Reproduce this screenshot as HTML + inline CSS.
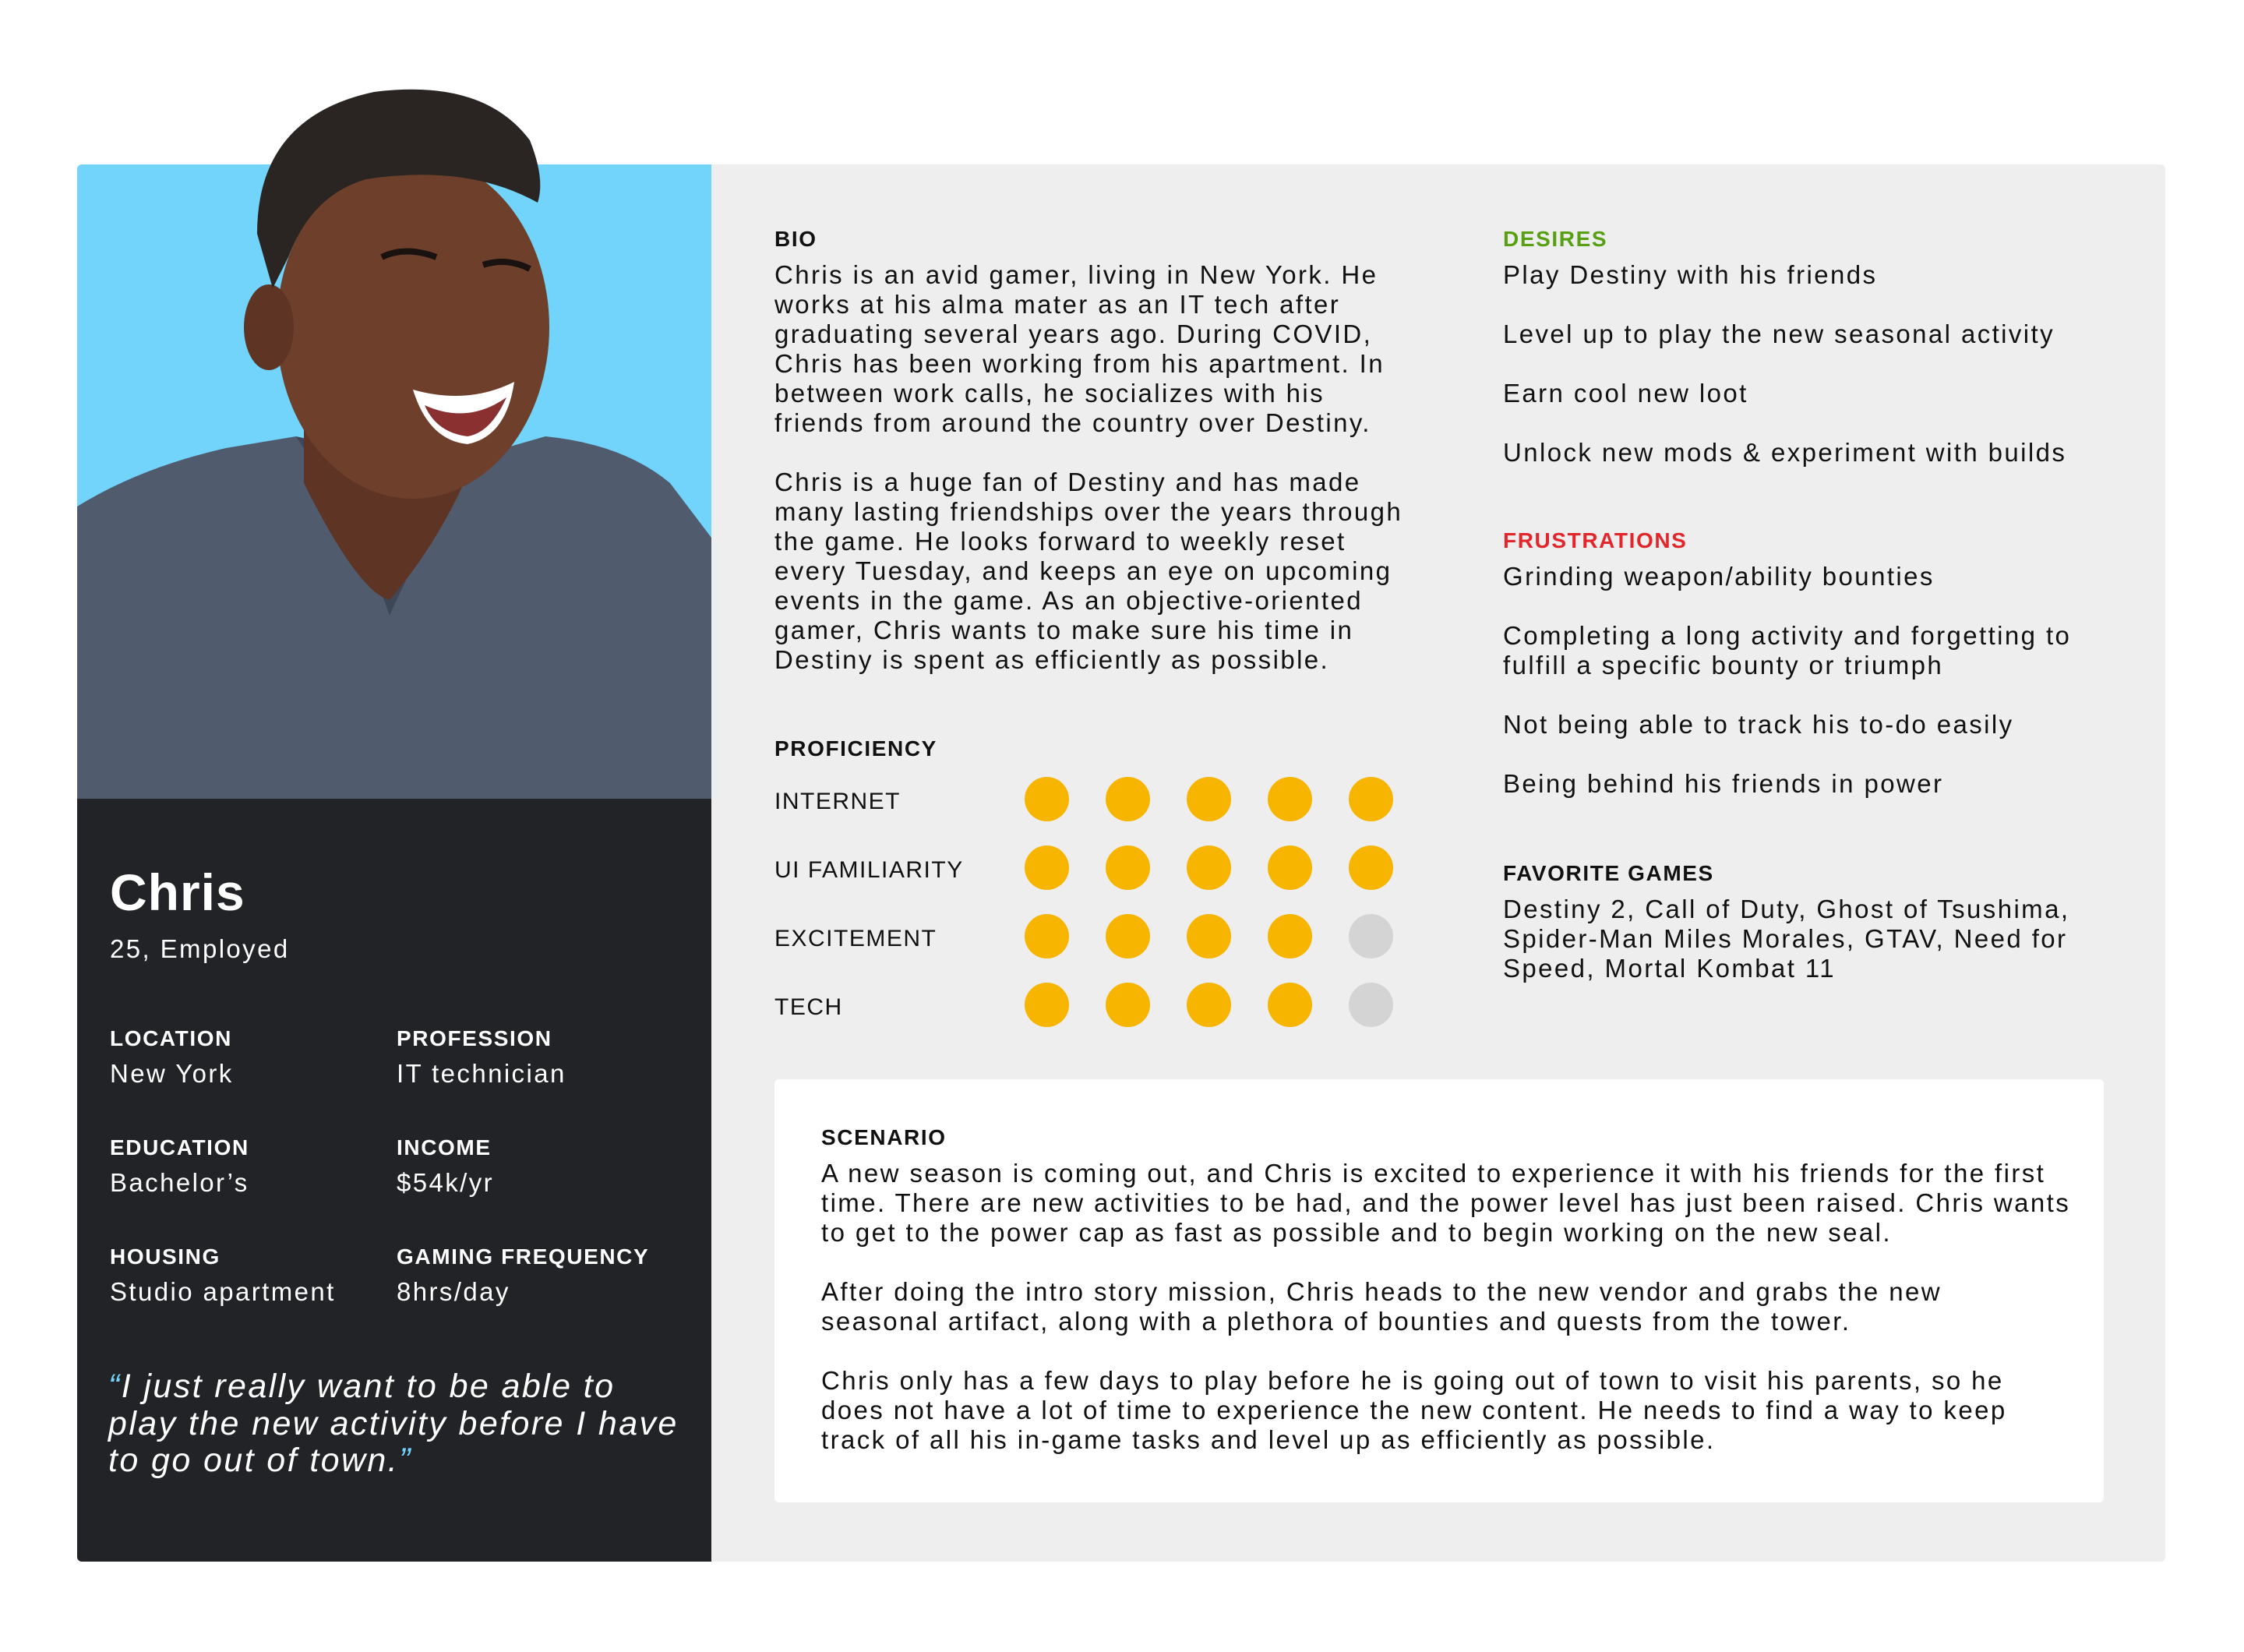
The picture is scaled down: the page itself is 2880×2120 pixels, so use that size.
<!DOCTYPE html>
<html><head><meta charset="utf-8"><style>
*{margin:0;padding:0;box-sizing:border-box}
body{width:2880px;height:2120px;background:#fff;position:relative;overflow:hidden;font-family:"Liberation Sans",sans-serif;color:#111}
.a{position:absolute;white-space:nowrap}
.t{font-size:33px;line-height:38px;letter-spacing:2.4px}
.p{font-size:30px;line-height:38px;letter-spacing:1.5px}
.h{font-size:28px;font-weight:bold;letter-spacing:1.6px;line-height:38px}
.w{color:#fff}
.dot{position:absolute;width:57px;height:57px;border-radius:50%;background:#f7b500}
.g{background:#d4d4d4}
</style></head><body>
<div class="a" style="left:99px;top:211px;width:2680px;height:1793px;background:#eeeeee;border-radius:6px"></div>
<div class="a" style="left:99px;top:211px;width:814px;height:814px;background:#72d3fb;border-radius:6px 0 0 0"></div>
<svg class="a" style="left:0;top:0" width="913" height="1025" viewBox="0 0 913 1025">
<defs><clipPath id="c"><rect x="99" y="100" width="814" height="925"/></clipPath></defs>
<g clip-path="url(#c)">
<path d="M99 650 Q180 600 290 575 L380 560 Q470 620 560 600 L700 560 Q800 570 860 620 L913 690 L913 1025 L99 1025 Z" fill="#505b6e"/>
<path d="M380 560 Q470 700 500 790 Q540 700 600 600 L560 600 Z" fill="#3e4757"/>
<path d="M390 520 L390 620 Q460 760 500 770 Q560 700 600 610 L610 520 Z" fill="#5e3524"/>
<ellipse cx="530" cy="420" rx="175" ry="220" fill="#6e402b"/>
<ellipse cx="345" cy="420" rx="32" ry="55" fill="#5e3524"/>
<path d="M330 300 Q330 150 480 118 Q620 100 680 180 Q700 230 690 260 Q600 210 470 230 Q400 250 370 330 L350 370 Z" fill="#2a2523"/>
<path d="M530 500 Q600 520 660 490 Q650 560 600 570 Q550 565 530 500 Z" fill="#fff"/>
<path d="M545 520 Q600 545 650 510 Q630 555 600 560 Q560 555 545 520 Z" fill="#8a3030"/>
<path d="M490 330 Q520 315 560 330" stroke="#1a1210" stroke-width="8" fill="none"/>
<path d="M620 340 Q650 330 680 345" stroke="#1a1210" stroke-width="8" fill="none"/>
</g></svg>
<div class="a" style="left:99px;top:1025px;width:814px;height:979px;background:#222326;border-radius:0 0 0 6px"></div>

<div class="a w" style="left:141px;top:1105px;font-size:66px;font-weight:bold;line-height:80px;letter-spacing:1px">Chris</div>
<div class="a w t" style="left:141px;top:1199px">25, Employed</div>
<div class="a w h" style="left:141px;top:1314px">LOCATION</div>
<div class="a w t" style="left:141px;top:1359px">New York</div>
<div class="a w h" style="left:509px;top:1314px">PROFESSION</div>
<div class="a w t" style="left:509px;top:1359px">IT technician</div>
<div class="a w h" style="left:141px;top:1454px">EDUCATION</div>
<div class="a w t" style="left:141px;top:1499px">Bachelor’s</div>
<div class="a w h" style="left:509px;top:1454px">INCOME</div>
<div class="a w t" style="left:509px;top:1499px">$54k/yr</div>
<div class="a w h" style="left:141px;top:1594px">HOUSING</div>
<div class="a w t" style="left:141px;top:1639px">Studio apartment</div>
<div class="a w h" style="left:509px;top:1594px">GAMING FREQUENCY</div>
<div class="a w t" style="left:509px;top:1639px">8hrs/day</div>
<div class="a w" style="left:139px;top:1756px;font-size:43px;font-style:italic;line-height:47.5px;letter-spacing:2.4px"><span style="color:#72d3fb">“</span>I just really want to be able to<br>play the new activity before I have<br>to go out of town.<span style="color:#72d3fb">”</span></div>

<div class="a h" style="left:994px;top:288px">BIO</div>
<div class="a t" style="left:994px;top:334px">Chris is an avid gamer, living in New York. He<br>works at his alma mater as an IT tech after<br>graduating several years ago. During COVID,<br>Chris has been working from his apartment. In<br>between work calls, he socializes with his<br>friends from around the country over Destiny.<br><br>Chris is a huge fan of Destiny and has made<br>many lasting friendships over the years through<br>the game. He looks forward to weekly reset<br>every Tuesday, and keeps an eye on upcoming<br>events in the game. As an objective-oriented<br>gamer, Chris wants to make sure his time in<br>Destiny is spent as efficiently as possible.</div>

<div class="a h" style="left:994px;top:942px">PROFICIENCY</div>
<div class="a p" style="left:994px;top:1010px">INTERNET</div>
<div class="a p" style="left:994px;top:1098px">UI FAMILIARITY</div>
<div class="a p" style="left:994px;top:1186px">EXCITEMENT</div>
<div class="a p" style="left:994px;top:1274px">TECH</div>
<div class="dot" style="left:1315px;top:997px"></div><div class="dot" style="left:1419px;top:997px"></div><div class="dot" style="left:1523px;top:997px"></div><div class="dot" style="left:1627px;top:997px"></div><div class="dot" style="left:1731px;top:997px"></div>
<div class="dot" style="left:1315px;top:1085px"></div><div class="dot" style="left:1419px;top:1085px"></div><div class="dot" style="left:1523px;top:1085px"></div><div class="dot" style="left:1627px;top:1085px"></div><div class="dot" style="left:1731px;top:1085px"></div>
<div class="dot" style="left:1315px;top:1173px"></div><div class="dot" style="left:1419px;top:1173px"></div><div class="dot" style="left:1523px;top:1173px"></div><div class="dot" style="left:1627px;top:1173px"></div><div class="dot g" style="left:1731px;top:1173px"></div>
<div class="dot" style="left:1315px;top:1261px"></div><div class="dot" style="left:1419px;top:1261px"></div><div class="dot" style="left:1523px;top:1261px"></div><div class="dot" style="left:1627px;top:1261px"></div><div class="dot g" style="left:1731px;top:1261px"></div>

<div class="a h" style="left:1929px;top:288px;color:#57a012">DESIRES</div>
<div class="a t" style="left:1929px;top:334px">Play Destiny with his friends<br><br>Level up to play the new seasonal activity<br><br>Earn cool new loot<br><br>Unlock new mods &amp; experiment with builds</div>
<div class="a h" style="left:1929px;top:675px;color:#e3262b">FRUSTRATIONS</div>
<div class="a t" style="left:1929px;top:721px">Grinding weapon/ability bounties<br><br>Completing a long activity and forgetting to<br>fulfill a specific bounty or triumph<br><br>Not being able to track his to-do easily<br><br>Being behind his friends in power</div>
<div class="a h" style="left:1929px;top:1102px">FAVORITE GAMES</div>
<div class="a t" style="left:1929px;top:1148px">Destiny 2, Call of Duty, Ghost of Tsushima,<br>Spider-Man Miles Morales, GTAV, Need for<br>Speed, Mortal Kombat 11</div>

<div class="a" style="left:994px;top:1385px;width:1706px;height:543px;background:#fff;border-radius:6px"></div>
<div class="a h" style="left:1054px;top:1441px">SCENARIO</div>
<div class="a t" style="left:1054px;top:1487px">A new season is coming out, and Chris is excited to experience it with his friends for the first<br>time. There are new activities to be had, and the power level has just been raised. Chris wants<br>to get to the power cap as fast as possible and to begin working on the new seal.<br><br>After doing the intro story mission, Chris heads to the new vendor and grabs the new<br>seasonal artifact, along with a plethora of bounties and quests from the tower.<br><br>Chris only has a few days to play before he is going out of town to visit his parents, so he<br>does not have a lot of time to experience the new content. He needs to find a way to keep<br>track of all his in-game tasks and level up as efficiently as possible.</div>
</body></html>
